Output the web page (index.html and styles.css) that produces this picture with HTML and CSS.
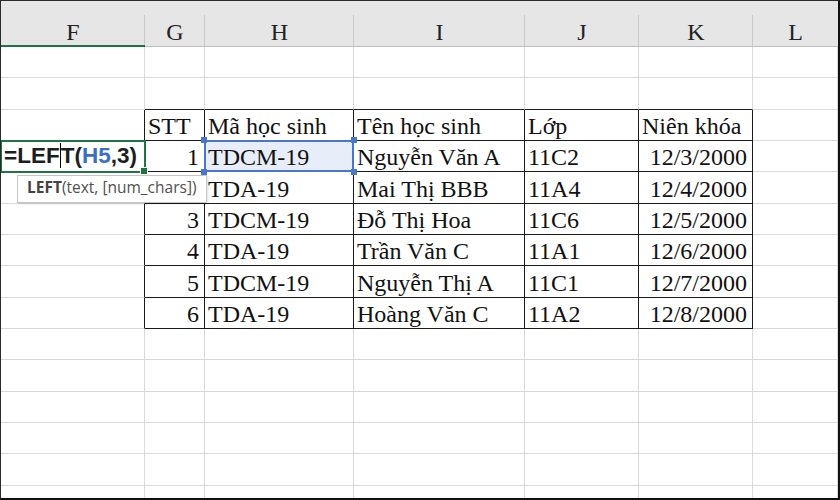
FILE: index.html
```html
<!DOCTYPE html>
<html lang="vi">
<head>
<meta charset="utf-8">
<title>Excel LEFT</title>
<link rel="stylesheet" href="styles.css">
</head>
<body>
<div class="sheet">
  <div class="hd hd-active">F</div>
  <div class="hd">G</div>
  <div class="hd">H</div>
  <div class="hd">I</div>
  <div class="hd">J</div>
  <div class="hd">K</div>
  <div class="hd hd-last">L</div>

  <div class="c"></div><div class="c"></div><div class="c"></div><div class="c"></div><div class="c"></div><div class="c"></div><div class="c"></div>

  <div class="c"></div><div class="c tt"></div><div class="c tt"></div><div class="c tt"></div><div class="c tt"></div><div class="c tt"></div><div class="c"></div>

  <div class="c tl"></div>
  <div class="c t">STT</div>
  <div class="c t">Mã học sinh</div>
  <div class="c t">Tên học sinh</div>
  <div class="c t">Lớp</div>
  <div class="c t">Niên khóa</div>
  <div class="c"></div>

  <div class="c tl active">
    <span class="formula">=LEF<span class="caret"></span>T(<span class="ref">H5</span>,3)</span>
    <div class="tip"><b>LEFT</b>(text, [num_chars])</div>
  </div>
  <div class="c t r">1</div>
  <div class="c t sel">TDCM-19<span class="h h-tl"></span><span class="h h-tr"></span><span class="h h-bl"></span><span class="h h-br"></span></div>
  <div class="c t">Nguyễn Văn A</div>
  <div class="c t">11C2</div>
  <div class="c t r">12/3/2000</div>
  <div class="c"></div>

  <div class="c tl"></div>
  <div class="c t r">2</div>
  <div class="c t">TDA-19</div>
  <div class="c t">Mai Thị BBB</div>
  <div class="c t">11A4</div>
  <div class="c t r">12/4/2000</div>
  <div class="c"></div>

  <div class="c tl"></div>
  <div class="c t r">3</div>
  <div class="c t">TDCM-19</div>
  <div class="c t">Đỗ Thị Hoa</div>
  <div class="c t">11C6</div>
  <div class="c t r">12/5/2000</div>
  <div class="c"></div>

  <div class="c tl"></div>
  <div class="c t r">4</div>
  <div class="c t">TDA-19</div>
  <div class="c t">Trần Văn C</div>
  <div class="c t">11A1</div>
  <div class="c t r">12/6/2000</div>
  <div class="c"></div>

  <div class="c tl"></div>
  <div class="c t r">5</div>
  <div class="c t">TDCM-19</div>
  <div class="c t">Nguyễn Thị A</div>
  <div class="c t">11C1</div>
  <div class="c t r">12/7/2000</div>
  <div class="c"></div>

  <div class="c tl"></div>
  <div class="c t r">6</div>
  <div class="c t">TDA-19</div>
  <div class="c t">Hoàng Văn C</div>
  <div class="c t">11A2</div>
  <div class="c t r">12/8/2000</div>
  <div class="c"></div>

  <div class="c"></div><div class="c"></div><div class="c"></div><div class="c"></div><div class="c"></div><div class="c"></div><div class="c"></div>
  <div class="c"></div><div class="c"></div><div class="c"></div><div class="c"></div><div class="c"></div><div class="c"></div><div class="c"></div>
  <div class="c"></div><div class="c"></div><div class="c"></div><div class="c"></div><div class="c"></div><div class="c"></div><div class="c"></div>
  <div class="c"></div><div class="c"></div><div class="c"></div><div class="c"></div><div class="c"></div><div class="c"></div><div class="c"></div>
  <div class="c"></div><div class="c"></div><div class="c"></div><div class="c"></div><div class="c"></div><div class="c"></div><div class="c"></div>
  <div class="c"></div><div class="c"></div><div class="c"></div><div class="c"></div><div class="c"></div><div class="c"></div><div class="c"></div>
</div>
</body>
</html>
```

FILE: styles.css
```css
* { box-sizing: border-box; }

html, body {
  margin: 0;
  padding: 0;
  background: #ffffff;
}

.sheet {
  width: 840px;
  height: 500px;
  overflow: hidden;
  background: #ffffff;
  border-top: 1px solid #2a2a2a;
  border-left: 1px solid #2a2a2a;
  border-right: 2px solid #111111;
  border-bottom: 2px solid #111111;
  display: grid;
  grid-template-columns: 144px 60px 149px 171px 114px 114px 1fr;
  grid-template-rows: 46px repeat(15, 31.333px);
  font-family: "Liberation Serif", "Times New Roman", serif;
  font-size: 24px;
  color: #111111;
}

/* column headers */
.hd {
  display: flex;
  align-items: flex-end;
  justify-content: center;
  background:
    linear-gradient(#c9c9c9, #c9c9c9) right bottom / 1px 31px no-repeat,
    #e6e6e6;
  border-bottom: 1px solid #bdbdbd;
  color: #222222;
  line-height: normal;
}
.hd-last { background: #e6e6e6; }
.hd-active {
  border-bottom-color: #217346;
  box-shadow: inset 0 -1px 0 #217346;
}

/* cells */
.c {
  display: flex;
  align-items: flex-end;
  padding: 0 3px;
  border-right: 1px solid #d9d9d9;
  border-bottom: 1px solid #d9d9d9;
  white-space: nowrap;
  line-height: normal;
}
.c.r { justify-content: flex-end; padding-right: 5px; }

.t { border-right-color: #1a1a1a; border-bottom-color: #1a1a1a; }
.tt { border-bottom-color: #1a1a1a; }
.tl { border-right-color: #1a1a1a; }

/* active cell in edit mode */
.active {
  position: relative;
  z-index: 3;
  padding-left: 3px;
  outline: 2px solid #217346;
  outline-offset: -1px;
}
.active::after {
  content: "";
  position: absolute;
  right: -4px;
  bottom: -4px;
  width: 6px;
  height: 6px;
  background: #217346;
  border: 1px solid #ffffff;
}
.formula {
  font-family: "Liberation Sans", Arial, sans-serif;
  font-weight: bold;
  font-size: 22.5px;
  color: #1e1e1e;
  line-height: 28px;
  padding-bottom: 1px;
}
.caret {
  display: inline-block;
  width: 0;
  height: 25px;
  border-left: 1px solid #000000;
  vertical-align: -5px;
}
.ref { color: #3b6fc4; }

/* tooltip */
.tip {
  position: absolute;
  left: 16px;
  top: 34px;
  padding: 2px 9px 5px 9px;
  background: #ffffff;
  border: 1px solid #c6c6c6;
  box-shadow: 1px 1px 2px rgba(0, 0, 0, 0.12);
  font-family: "Open Sans", "Liberation Sans", sans-serif;
  font-size: 15.5px;
  line-height: 19px;
  color: #505050;
  white-space: nowrap;
}
.tip b { font-weight: bold; color: #444444; }

/* referenced range H5 */
.sel {
  position: relative;
  z-index: 2;
  background: #e8eef9;
  border-right-color: #4a78c8;
  border-bottom-color: #4a78c8;
  box-shadow: -1px -1px 0 #4a78c8, inset 0 0 0 1px #4a78c8;
}
.h {
  position: absolute;
  width: 6px;
  height: 6px;
  background: #4a78c8;
}
.h-tl { left: -4px; top: -4px; }
.h-tr { right: -4px; top: -4px; }
.h-bl { left: -4px; bottom: -4px; }
.h-br { right: -4px; bottom: -4px; }
```
